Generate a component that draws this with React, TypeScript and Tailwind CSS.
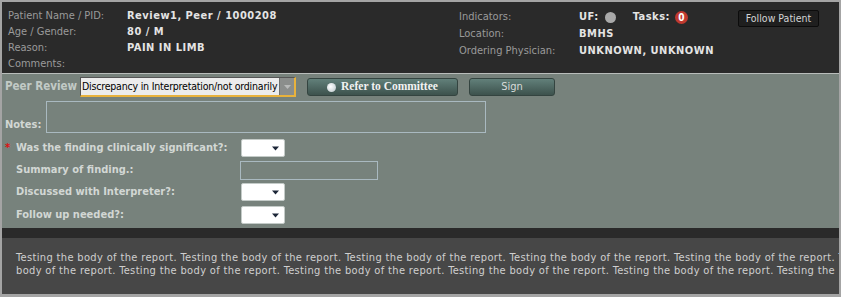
import React from "react";

function MiniSelect() {
  return (
    <div className="w-[44px] h-[18px] bg-white border border-[#c4cbc8] rounded-[2px] flex items-center justify-end pr-[5px]">
      <svg width="7" height="5" viewBox="0 0 7 5">
        <path d="M0 0.5h7L3.5 4.5z" fill="#1c2638" />
      </svg>
    </div>
  );
}

const line1 =
  "Testing the body of the report. Testing the body of the report. Testing the body of the report. Testing the body of the report. Testing the body of the report. Testing the";
const line2 =
  "body of the report. Testing the body of the report. Testing the body of the report. Testing the body of the report. Testing the body of the report. Testing the";

export default function App() {
  return (
    <div className="w-[841px] h-[297px] box-border border-2 border-b-[3px] border-[#a4a4a4] flex flex-col overflow-hidden font-['DejaVu_Sans_Condensed','DejaVu_Sans',sans-serif] text-[11px]">
      {/* Header */}
      <div className="h-[71px] bg-[#2a2a2a] flex pl-[6px] pt-[6px]">
        <div className="w-[451px] grid grid-cols-[119px_1fr] auto-rows-[16px] items-center">
          <div className="text-[#9a9a9a]">Patient Name / PID:</div>
          <div className="text-[#e4e4e4] font-bold tracking-[0.5px]">Review1, Peer / 1000208</div>
          <div className="text-[#9a9a9a]">Age / Gender:</div>
          <div className="text-[#e4e4e4] font-bold tracking-[0.5px]">80 / M</div>
          <div className="text-[#9a9a9a]">Reason:</div>
          <div className="text-[#e4e4e4] font-bold tracking-[0.5px]">PAIN IN LIMB</div>
          <div className="text-[#9a9a9a]">Comments:</div>
          <div />
        </div>
        <div className="grid grid-cols-[120px_auto] auto-rows-[17px] items-center content-start pt-[1px]">
          <div className="text-[#9a9a9a] h-[19px] flex items-center">Indicators:</div>
          <div className="h-[19px] flex items-center text-[#e4e4e4] font-bold tracking-[0.5px]">
            <span>UF:</span>
            <span className="ml-[6px] w-[11px] h-[11px] rounded-full bg-[#a9a9a9]" />
            <span className="ml-[17px]">Tasks:</span>
            <span className="ml-[5px] w-[13px] h-[13px] rounded-full bg-[#c0392f] text-white text-[10px] leading-[13px] text-center tracking-normal">0</span>
          </div>
          <div className="text-[#9a9a9a]">Location:</div>
          <div className="text-[#e4e4e4] font-bold tracking-[0.5px]">BMHS</div>
          <div className="text-[#9a9a9a]">Ordering Physician:</div>
          <div className="text-[#e4e4e4] font-bold tracking-[0.5px]">UNKNOWN, UNKNOWN</div>
        </div>
        <div className="ml-auto mr-[20px] mt-[2px]">
          <div className="w-[81px] h-[17px] bg-[#1f1f1f] border border-[#0c0c0c] rounded-[2px] flex items-center justify-center text-[#d4d4d4] text-[10.5px]">
            Follow Patient
          </div>
        </div>
      </div>
      <div className="h-[1px] bg-[#b9bdbb]" />

      {/* Green area */}
      <div className="h-[154px] bg-[#77827c] pl-[3px] pt-[3px] flex flex-col">
        <div className="flex items-center h-[20px]">
          <div className="w-[75px] text-[#c2cac6] font-bold text-[11.5px]">Peer Review</div>
          <div className="w-[216px] h-[20px] flex bg-[#ececec] border-t border-l border-[#555] border-b-2 border-b-[#e8b23c] border-r-2 border-r-[#e8b23c]">
            <div className="flex-1 flex items-center pl-[1px] text-black text-[10.5px] tracking-[-0.2px] overflow-hidden whitespace-nowrap">
              Discrepancy in Interpretation/not ordinarily
            </div>
            <div className="w-[15px] bg-[#8b8e8c] border-l border-[#6d706e] flex items-center justify-center">
              <svg width="7" height="4" viewBox="0 0 7 4">
                <path d="M0 0h7L3.5 4z" fill="#b8bab9" />
              </svg>
            </div>
          </div>
          <div className="ml-[11px] w-[151px] h-[18px] rounded-[3px] border border-[#344440] bg-gradient-to-b from-[#62807a] to-[#3d524d] flex items-center justify-center gap-[5px] text-[#f2f2f2] font-bold text-[11.5px] font-['Liberation_Serif','DejaVu_Serif',serif]">
            <span className="w-[9px] h-[9px] rounded-full bg-[radial-gradient(circle_at_40%_40%,#ffffff,#b8c4c8)]" />
            <span>Refer to Committee</span>
          </div>
          <div className="ml-[11px] w-[86px] h-[18px] rounded-[3px] border border-[#344440] bg-gradient-to-b from-[#62807a] to-[#3d524d] flex items-center justify-center text-[#d8dcda] text-[11px]">
            Sign
          </div>
        </div>

        <div className="flex items-end mt-[4px]">
          <div className="w-[41px] text-[#d2d7d4] font-bold leading-[16px]">Notes:</div>
          <div className="w-[440px] h-[32px] border border-[#a9b9c0]" />
        </div>

        <div className="flex items-center h-[18px] mt-[6px]">
          <div className="w-[236px] flex items-center">
            <span className="w-[11px] text-[#e01010] font-bold">*</span>
            <span className="text-[#d2d7d4] font-bold">Was the finding clinically significant?:</span>
          </div>
          <MiniSelect />
        </div>
        <div className="flex items-center h-[19px] mt-[4px]">
          <div className="w-[235px] pl-[11px] text-[#d2d7d4] font-bold">Summary of finding.:</div>
          <div className="w-[138px] h-[19px] border border-[#a9b9c0]" />
        </div>
        <div className="flex items-center h-[18px] mt-[3px]">
          <div className="w-[236px] pl-[11px] text-[#d2d7d4] font-bold">Discussed with Interpreter?:</div>
          <MiniSelect />
        </div>
        <div className="flex items-center h-[18px] mt-[5px]">
          <div className="w-[236px] pl-[11px] text-[#d2d7d4] font-bold">Follow up needed?:</div>
          <MiniSelect />
        </div>
      </div>

      <div className="h-[10px] bg-[#2a2a2a]" />
      <div className="flex-1 bg-[#474747] pl-[14px] pt-[13px] overflow-hidden text-[#cfcfcf] leading-[13px] whitespace-nowrap tracking-[0.35px]">
        <div>{line1}</div>
        <div>{line2}</div>
      </div>
    </div>
  );
}
